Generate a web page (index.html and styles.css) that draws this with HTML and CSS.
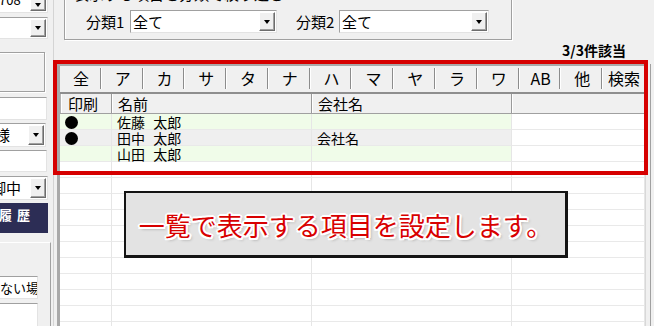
FILE: index.html
```html
<!DOCTYPE html>
<html lang="ja">
<head>
<meta charset="utf-8">
<link rel="stylesheet" href="styles.css">
</head>
<body>
<div class="app">
  <aside class="side">
    <div class="combo c1"><span class="val v1">/708</span><span class="btn"></span></div>
    <div class="combo c2"><span class="val"></span><span class="btn"></span></div>
    <div class="grp"></div>
    <div class="field f1"></div>
    <div class="combo c3"><span class="val v3">様</span><span class="btn"></span></div>
    <div class="field f2"></div>
    <div class="combo c4"><span class="val v4">御中</span><span class="btn"></span></div>
    <div class="hist"><span class="h1">履</span><span>歴</span></div>
    <div class="grp2">
      <div class="field f3">ない場</div>
      <div class="field f4"></div>
    </div>
  </aside>
  <main class="main">
    <div class="filter">
      <span class="legend">表示する項目を分類で絞り込む</span>
      <span class="lbl">分類1</span>
      <div class="combo fc1"><span class="val fv">全て</span><span class="btn"></span></div>
      <span class="lbl lbl2">分類2</span>
      <div class="combo fc2"><span class="val fv">全て</span><span class="btn"></span></div>
    </div>
    <div class="count">3/3件該当</div>
    <div class="panel">
      <div class="tabs">
        <span class="tab">全</span><span class="tab">ア</span><span class="tab">カ</span><span class="tab">サ</span><span class="tab">タ</span><span class="tab">ナ</span><span class="tab">ハ</span><span class="tab">マ</span><span class="tab">ヤ</span><span class="tab">ラ</span><span class="tab">ワ</span><span class="tab">AB</span><span class="tab">他</span><span class="tab tab-last">検索</span>
      </div>
      <div class="grid">
        <div class="hdr">
          <span class="hc hc1">印刷</span><span class="hc">名前</span><span class="hc">会社名</span><span class="hc hc4"></span>
        </div>
        <div class="row g"><span class="c"><i class="dot"></i></span><span class="c t">佐藤 太郎</span><span class="c t"></span><span class="c w"></span></div>
        <div class="row s"><span class="c"><i class="dot"></i></span><span class="c t">田中 太郎</span><span class="c t">会社名</span><span class="c w"></span></div>
        <div class="row g"><span class="c"></span><span class="c t">山田 太郎</span><span class="c t"></span><span class="c w"></span></div>
        <div class="row"><span class="c"></span><span class="c"></span><span class="c"></span><span class="c"></span></div>
        <div class="row"><span class="c"></span><span class="c"></span><span class="c"></span><span class="c"></span></div>
        <div class="row"><span class="c"></span><span class="c"></span><span class="c"></span><span class="c"></span></div>
        <div class="row"><span class="c"></span><span class="c"></span><span class="c"></span><span class="c"></span></div>
        <div class="row"><span class="c"></span><span class="c"></span><span class="c"></span><span class="c"></span></div>
        <div class="row"><span class="c"></span><span class="c"></span><span class="c"></span><span class="c"></span></div>
        <div class="row"><span class="c"></span><span class="c"></span><span class="c"></span><span class="c"></span></div>
        <div class="row"><span class="c"></span><span class="c"></span><span class="c"></span><span class="c"></span></div>
        <div class="row"><span class="c"></span><span class="c"></span><span class="c"></span><span class="c"></span></div>
        <div class="row"><span class="c"></span><span class="c"></span><span class="c"></span><span class="c"></span></div>
        <div class="row"><span class="c"></span><span class="c"></span><span class="c"></span><span class="c"></span></div>
      </div>
    </div>
  </main>
</div>
<div class="redframe"></div>
<div class="callout">一覧で表示する項目を設定します。</div>
</body>
</html>
```

FILE: styles.css
```css
* { box-sizing: border-box; }
html, body { margin: 0; padding: 0; }
body {
  width: 654px;
  height: 326px;
  overflow: hidden;
  position: relative;
  background: #f0f0f0;
  color: #000;
  font-family: "Noto Sans CJK JP", "Noto Sans", sans-serif;
}
.app { display: flex; height: 326px; }

/* ---------- left side panel ---------- */
.side {
  width: 54px;
  flex: none;
  border-right: 1px solid #d4d4d4;
  display: flex;
  flex-direction: column;
  overflow: hidden;
}
.side > * { margin-left: -4px; flex: none; }

.combo {
  display: flex;
  align-items: center;
  background: #fff;
  border: 1px solid;
  border-color: #a0a0a0 #e3e3e3 #e3e3e3 #a0a0a0;
  overflow: hidden;
}
.val { flex: 1; white-space: nowrap; overflow: hidden; }
.btn {
  flex: none;
  width: 16px;
  align-self: stretch;
  margin: 1px 1px 1px 0;
  background: #f0f0f0;
  border: 1px solid;
  border-color: #fff #6d6d6d #6d6d6d #fff;
  box-shadow: inset -1px -1px 0 #a0a0a0;
  display: flex;
  align-items: center;
  justify-content: center;
}
.btn::before {
  content: "";
  border-left: 3.5px solid transparent;
  border-right: 3.5px solid transparent;
  border-top: 4px solid #000;
}

.field {
  background: #fff;
  border: 1px solid;
  border-color: #a0a0a0 #e3e3e3 #e3e3e3 #a0a0a0;
}

.c1 { margin-top: -9px; height: 22px; width: 52px; align-items: flex-start; }
.c1 .btn { margin-top: 6px; }
.v1 { font-size: 13px; line-height: 16px; text-indent: -3px; }
.c2 { margin-top: 4px; height: 22px; width: 52px; }
.grp {
  margin-top: 13px;
  height: 40px;
  width: 49px;
  border: 1px solid #a0a0a0;
  box-shadow: inset 1px 1px 0 #fff, 1px 1px 0 #fff;
}
.f1 { margin-top: 5px; height: 23px; width: 51px; }
.c3 { margin-top: 3px; height: 24px; width: 50px; }
.v3 { font-size: 15px; line-height: 20px; text-indent: -2px; }
.f2 { margin-top: 3px; height: 22px; width: 51px; }
.c4 { margin-top: 4px; height: 24px; width: 52px; }
.v4 { font-size: 15px; line-height: 20px; text-indent: -6px; }
.hist {
  margin-top: 3px;
  height: 30px;
  width: 52px;
  background: #2c2d55;
  color: #fff;
  font-size: 13px;
  font-weight: 700;
  padding: 4px 0 0 3px;
  display: flex;
  align-items: flex-start;
}
.hist span { line-height: 16px; }
.h1 { margin-right: 5px; }
.grp2 {
  margin-top: 9px;
  width: 55px;
  flex: 1;
  border-top: 1px solid #fff;
  border-right: 1px solid #a0a0a0;
  display: flex;
  flex-direction: column;
}
.f3 {
  margin-top: 33px;
  height: 23px;
  width: 42px;
  font-size: 13px;
  line-height: 21px;
  padding-left: 3px;
  white-space: nowrap;
  overflow: hidden;
}
.f4 { margin-top: 4px; height: 26px; width: 42px; }

/* ---------- main area ---------- */
.main {
  flex: 1;
  display: flex;
  flex-direction: column;
  min-width: 0;
}
.filter {
  position: relative;
  margin: -4px 0 0 10px;
  width: 448px;
  height: 44px;
  flex: none;
  border: 1px solid #a0a0a0;
  box-shadow: inset 1px 1px 0 #fff, 1px 1px 0 #fff;
  display: flex;
  align-items: flex-start;
  padding: 13px 0 0 21px;
}
.legend {
  position: absolute;
  left: 7px;
  top: -11px;
  font-size: 15px;
  line-height: 16px;
  padding: 0 2px;
  background: #f0f0f0;
  white-space: nowrap;
}
.lbl { font-size: 15px; line-height: 23px; width: 44px; flex: none; white-space: nowrap; }
.lbl2 { margin-left: 19px; width: 43px; }
.fc1 { width: 147px; height: 23px; flex: none; }
.fc2 { width: 150px; height: 23px; flex: none; }
.fv { font-size: 15px; line-height: 20px; padding-left: 2px; }

.count {
  flex: none;
  height: 20px;
  line-height: 20px;
  font-size: 14px;
  font-weight: 700;
  text-align: right;
  padding-right: 28px;
}

.panel {
  flex: 1;
  margin: 4px 0 0 3px;
  width: 589px;
  border-left: 3px solid #a9a9a9;
  border-top: 2px solid #a9a9a9;
  border-right: 1px solid #d8d8d8;
  box-shadow: 4px 0 0 #f0f0f0, 5px 0 0 #a0a0a0;
  background: #fff;
  display: flex;
  flex-direction: column;
  overflow: hidden;
}
.tabs {
  flex: none;
  height: 26px;
  background: #f0f0f0;
  display: grid;
  grid-template-columns: repeat(14, 1fr);
}
.tab {
  font-size: 16px;
  line-height: 24px;
  text-align: center;
  white-space: nowrap;
  background-image: linear-gradient(#8c8c8c, #8c8c8c), linear-gradient(#fff, #fff);
  background-size: 1px 21px, 1px 21px;
  background-position: right 1px top 2px, right 0 top 2px;
  background-repeat: no-repeat;
}
.tab-last { background-image: none; }

.grid {
  flex: 1;
  border-top: 2px solid #8e8e8e;
}
.hdr {
  display: grid;
  grid-template-columns: 52px 200px 200px 1fr;
  height: 20px;
  background: #f0f0f0;
  border-bottom: 1px solid #a0a0a0;
}
.hc {
  font-size: 15px;
  line-height: 19px;
  padding-left: 6px;
  border-right: 1px solid #9a9a9a;
  box-shadow: inset 1px 0 0 #fff;
  white-space: nowrap;
}
.hc1 { padding-left: 7px; border-left: 1px solid #b4b4b4; }
.hc4 { border-right: 1px solid #a0a0a0; }

.row {
  display: grid;
  grid-template-columns: 52px 200px 200px 1fr;
  height: 16px;
}
.c {
  border-right: 1px solid #e6e6e6;
  border-bottom: 1px solid #e9e9e9;
  font-size: 14px;
  line-height: 14px;
  padding-top: 1px;
  white-space: nowrap;
  display: flex;
  align-items: center;
}
.t { padding-left: 5px; word-spacing: 5px; }
.row.g .c { background: #f0fce9; }
.row.s .c { background: #efefef; }
.row .c.w { background: #fff; }
.dot {
  display: block;
  width: 13px;
  height: 13px;
  margin-left: 5px;
  border-radius: 50%;
  background: #000;
}

/* ---------- overlays ---------- */
.redframe {
  position: absolute;
  left: 53px;
  top: 60px;
  width: 595px;
  height: 115px;
  border: 4px solid #d60000;
}
.callout {
  position: absolute;
  left: 124px;
  top: 191px;
  width: 444px;
  height: 67px;
  background: #e3e3e3;
  border: 2px solid #141414;
  border-right-width: 3px;
  border-bottom-width: 3px;
  text-align: center;
  font-size: 26px;
  font-weight: 400;
  line-height: 60px;
  padding-top: 2px;
  color: #d80000;
  white-space: nowrap;
  text-shadow:
    2px 0 0 #fff, -2px 0 0 #fff, 0 2px 0 #fff, 0 -2px 0 #fff,
    1.5px 1.5px 0 #fff, -1.5px 1.5px 0 #fff, 1.5px -1.5px 0 #fff, -1.5px -1.5px 0 #fff,
    2px 2px 3px rgba(0, 0, 0, 0.35);
}
```
